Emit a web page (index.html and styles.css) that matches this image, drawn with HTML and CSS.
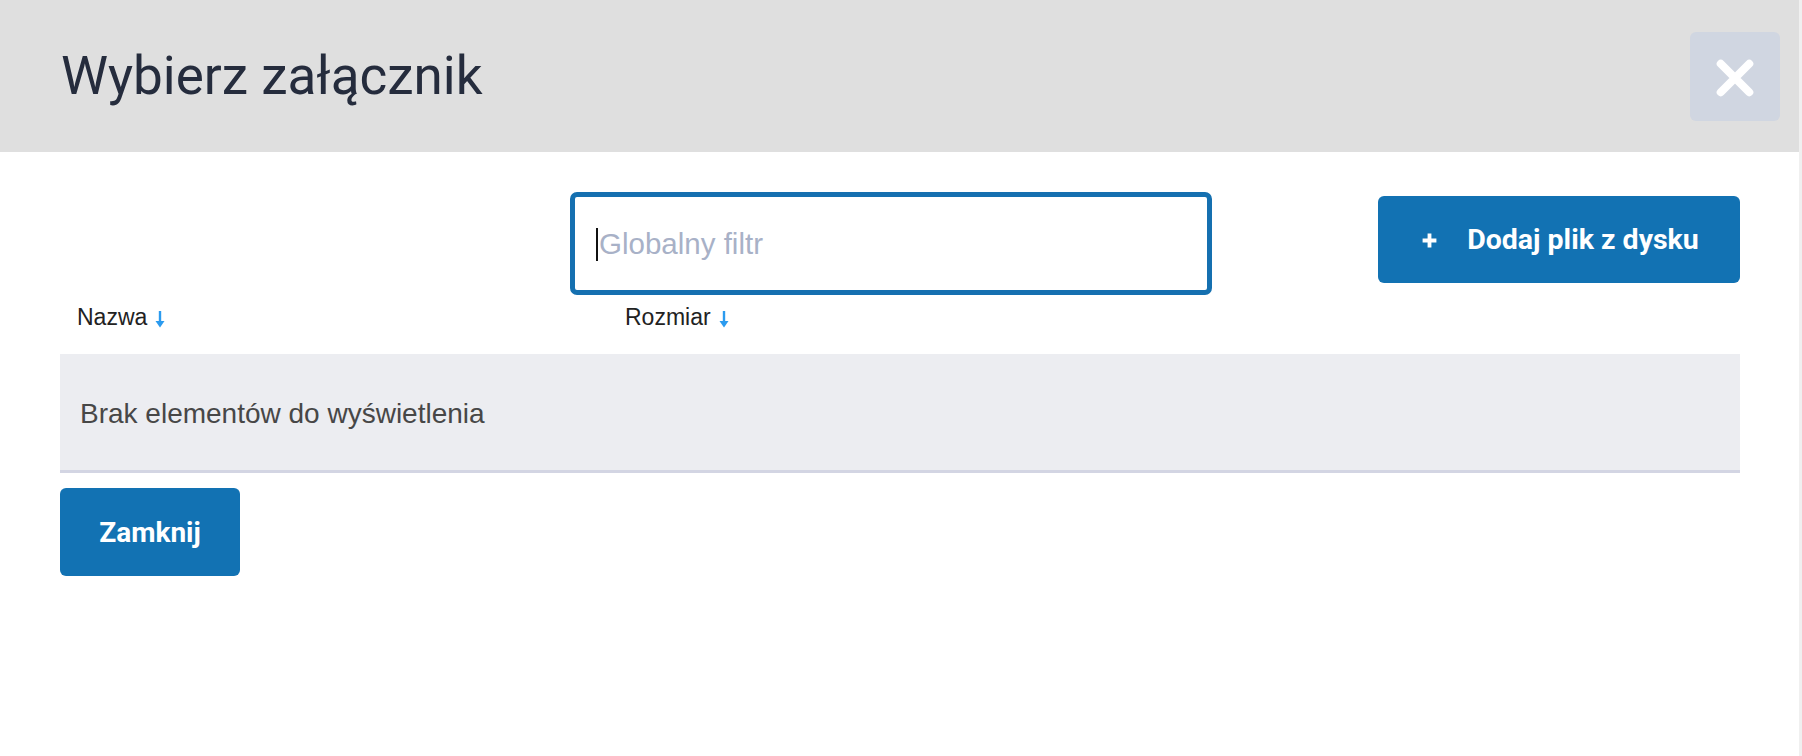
FILE: index.html
```html
<!DOCTYPE html>
<html lang="pl">
<head>
<meta charset="utf-8">
<title>Wybierz załącznik</title>
<link rel="stylesheet" href="styles.css">
</head>
<body>
<div class="modal">
  <header class="modal-header">
    <h1 class="modal-title">Wybierz załącznik</h1>
    <button class="close-btn" type="button" aria-label="Zamknij">
      <svg width="40" height="40" viewBox="0 0 40 40"><path d="M5 5 L35 35 M35 5 L5 35" stroke="#fff" stroke-width="8.5" stroke-linecap="round" fill="none"/></svg>
    </button>
  </header>
  <div class="modal-body">
    <div class="toolbar">
      <div class="filter-wrap">
        <input class="filter" type="text" placeholder="Globalny filtr">
        <span class="caret"></span>
      </div>
      <button class="btn btn-add" type="button">
        <svg class="plus" width="16" height="16" viewBox="0 0 16 16"><path d="M8 1.5 V14.5 M1.5 8 H14.5" stroke="#fff" stroke-width="3.6" fill="none"/></svg>
        <span>Dodaj plik z dysku</span>
      </button>
    </div>
    <div class="table-head">
      <div class="col">Nazwa<svg class="sort" width="12" height="20" viewBox="0 0 12 20"><path d="M6 2 V13" stroke="#2b9bef" stroke-width="2.4" fill="none"/><path d="M1.5 12 L10.5 12 L6 18.5 Z" fill="#2b9bef"/></svg></div>
      <div class="col">Rozmiar<svg class="sort" width="12" height="20" viewBox="0 0 12 20"><path d="M6 2 V13" stroke="#2b9bef" stroke-width="2.4" fill="none"/><path d="M1.5 12 L10.5 12 L6 18.5 Z" fill="#2b9bef"/></svg></div>
    </div>
    <div class="empty-row">Brak elementów do wyświetlenia</div>
    <button class="btn btn-close" type="button">Zamknij</button>
  </div>
</div>
</body>
</html>
```
FILE: styles.css
```css
html, body {
  margin: 0;
  padding: 0;
}
body {
  background: #f0f0f0;
  width: 1802px;
  height: 756px;
  overflow: hidden;
}
.modal {
  width: 1799px;
  height: 756px;
  background: #ffffff;
}
.modal-header {
  height: 152px;
  background: #dfdfdf;
  display: flex;
  align-items: flex-start;
  justify-content: space-between;
  box-sizing: border-box;
  padding: 0 19px 0 61px;
}
.modal-title {
  margin: 0;
  padding-top: 44px;
  font-family: Roboto, "Liberation Sans", sans-serif;
  font-weight: 400;
  font-size: 53px;
  line-height: 64px;
  color: #252c3d;
}
.close-btn {
  margin-top: 32px;
  width: 90px;
  height: 89px;
  border: 0;
  border-radius: 6px;
  background: #d0d6e1;
  display: flex;
  align-items: center;
  justify-content: center;
  padding: 0;
}
.close-btn svg {
  width: 38px;
  height: 38px;
  margin-top: 3px;
}
.modal-body {
  padding: 40px 59px 0 60px;
}
.toolbar {
  display: flex;
  align-items: flex-start;
}
.filter-wrap {
  position: relative;
  margin-left: 510px;
}
.filter {
  display: block;
  width: 642px;
  height: 103px;
  box-sizing: border-box;
  border: 5px solid #1570b0;
  border-radius: 7px;
  padding: 0 0 0 24px;
  font-family: "Liberation Sans", Arial, sans-serif;
  font-size: 29.5px;
  color: #222;
  outline: none;
  background: #fff;
}
.filter::placeholder {
  color: #a8b1c7;
  opacity: 1;
}
.caret {
  position: absolute;
  left: 26px;
  top: 36px;
  width: 2px;
  height: 33px;
  background: #111;
}
.btn {
  border: 0;
  border-radius: 6px;
  background: #1272b3;
  color: #fff;
  font-family: Roboto, "Liberation Sans", sans-serif;
  font-weight: 700;
  font-size: 28px;
  cursor: pointer;
}
.btn-add {
  margin-left: auto;
  margin-top: 4px;
  width: 362px;
  height: 87px;
  display: flex;
  align-items: center;
  justify-content: center;
  gap: 29px;
  padding: 0 0 0 2px;
}
.btn-add span {
  font-size: 28.5px;
}
.plus {
  width: 17px;
  height: 17px;
  margin-top: 2px;
}
.table-head {
  display: grid;
  grid-template-columns: 548px 1fr;
  padding: 0 0 0 17px;
  height: 59px;
  box-sizing: border-box;
  font-family: "Liberation Sans", Arial, sans-serif;
  font-size: 23px;
  line-height: 26px;
  color: #222;
}
.col {
  display: flex;
  align-items: center;
  gap: 7px;
  height: 44px;
}
.sort {
  width: 12px;
  height: 20px;
  margin-top: 4px;
}
.empty-row {
  background: #ecedf1;
  border-bottom: 3px solid #d3d5e3;
  padding: 44px 0 0 20px;
  box-sizing: border-box;
  height: 119px;
  font-family: "Liberation Sans", Arial, sans-serif;
  font-size: 28px;
  line-height: 32px;
  color: #474747;
}
.btn-close {
  margin-top: 15px;
  width: 180px;
  height: 88px;
  display: block;
  padding: 0;
}
```
